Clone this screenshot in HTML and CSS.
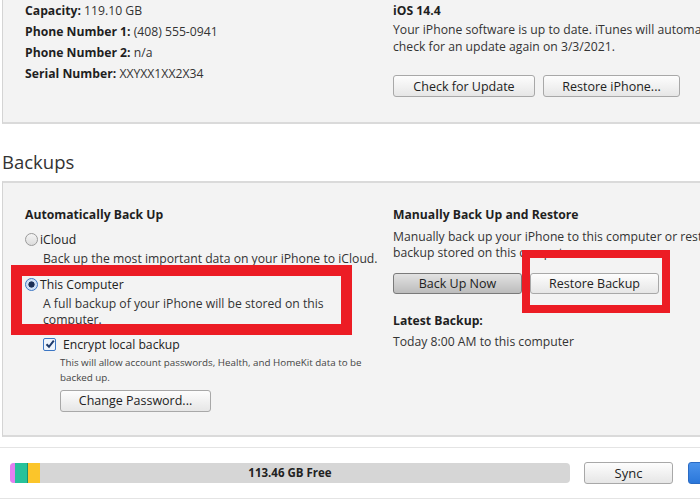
FILE: index.html
```html
<!DOCTYPE html>
<html lang="en">
<head>
    <meta charset="UTF-8">
    <title>iPhone - Summary</title>
    <link rel="stylesheet" href="styles.css">
</head>
<body>
    <div class="panel device">
        <div class="col">
            <div class="row"><b>Capacity:</b> 119.10 GB</div>
            <div class="row"><b>Phone Number 1:</b> (408) 555-0941</div>
            <div class="row"><b>Phone Number 2:</b> n/a</div>
            <div class="row"><b>Serial Number:</b> XXYXX1XX2X34</div>
        </div>
        <div class="col">
            <div class="row"><b>iOS 14.4</b></div>
            <p class="desc">Your iPhone software is up to date. iTunes will automatically<br>check for an update again on 3/3/2021.</p>
            <div class="buttons top-buttons">
                <button class="btn w-142">Check for Update</button>
                <button class="btn w-137">Restore iPhone...</button>
            </div>
        </div>
    </div>

    <h2 class="section-title">Backups</h2>

    <div class="panel backups">
        <div class="col">
            <div class="row"><b>Automatically Back Up</b></div>
            <label class="option first">
                <span class="radio"></span>iCloud
            </label>
            <p class="desc indent">Back up the most important data on your iPhone to iCloud.</p>
            <label class="option">
                <span class="radio checked"></span>This Computer
            </label>
            <p class="desc indent narrow">A full backup of your iPhone will be stored on this computer.</p>
            <label class="option check-row">
                <span class="checkbox">
                    <svg width="10" height="10" viewBox="0 0 10 10"><path d="M1.5 5.2 L4 7.8 L8.8 1.6" fill="none" stroke="#1d3a6b" stroke-width="2"/></svg>
                </span>Encrypt local backup
            </label>
            <p class="small">This will allow account passwords, Health, and HomeKit data to be<br>backed up.</p>
            <button class="btn w-151 pw-btn">Change Password...</button>
        </div>
        <div class="col">
            <div class="row"><b>Manually Back Up and Restore</b></div>
            <p class="desc manual">Manually back up your iPhone to this computer or restore a<br>backup stored on this computer.</p>
            <div class="buttons backup-buttons">
                <button class="btn pressed w-129">Back Up Now</button>
                <button class="btn w-129">Restore Backup</button>
            </div>
            <div class="row latest"><b>Latest Backup:</b></div>
            <div class="row">Today 8:00 AM to this computer</div>
        </div>

        <!-- annotation boxes -->
        <div class="mark mark-left"></div>
        <div class="mark mark-right"></div>
    </div>

    <div class="footer">
        <div class="storage">
            <span class="seg" style="width:5px;background:#e47ff2"></span>
            <span class="seg" style="width:12px;background:#27c29b"></span>
            <span class="seg" style="width:1px;background:#1f8f6f"></span>
            <span class="seg" style="width:12px;background:#fbc52a"></span>
            <span class="free">113.46 GB Free</span>
        </div>
        <button class="btn sync">Sync</button>
        <button class="btn done"></button>
    </div>
</body>
</html>
```

FILE: styles.css
```css
html, body {
    margin: 0;
    padding: 0;
    overflow: hidden;
}
body {
    width: 760px;
    font-family: "Open Sans", "Noto Sans", sans-serif;
    font-size: 12.2px;
    color: #333;
    background-color: white;
}
b {
    color: #1f1f1f;
    font-weight: 700;
}
.panel {
    margin-left: 2px;
    background-color: #f3f3f3;
    border-left: 1px solid #d4d4d4;
    display: grid;
    grid-template-columns: 368px 1fr;
    padding-left: 22px;
}
.device {
    height: 122px;
    border-bottom: 2px solid #dadada;
}
.backups {
    position: relative;
    height: 231px;
    border-top: 2px solid #dadada;
    border-bottom: 2px solid #dadada;
    padding-top: 21px;
}
.row {
    line-height: 21px;
    white-space: nowrap;
}
.desc {
    margin: 1px 0 0;
    line-height: 16.5px;
    white-space: nowrap;
}
.top-buttons {
    margin-top: 20px;
}
.buttons {
    display: flex;
    gap: 8px;
}
.btn {
    font-family: inherit;
    font-size: 12.5px;
    color: #222;
    height: 22px;
    padding: 0;
    border: 1px solid #a8a8a8;
    border-radius: 3px;
    background: linear-gradient(#fdfdfd, #e6e6e6);
}
.w-142 { width: 142px; }
.w-137 { width: 137px; }
.w-129 { width: 129px; }
.w-151 { width: 151px; }
.btn.pressed {
    border-color: #7a7a7a;
    background: linear-gradient(#e2e2e2, #bcbcbc);
}

.section-title {
    margin: 0;
    height: 57px;
    box-sizing: border-box;
    padding: 25px 0 0 2px;
    font-size: 18.5px;
    font-weight: 400;
    color: #333;
    line-height: 26px;
}

.option {
    display: flex;
    align-items: center;
    line-height: 21px;
    margin-top: 6px;
    color: #222;
}
.option.first {
    margin-top: 4px;
}
.radio {
    width: 11px;
    height: 11px;
    border-radius: 50%;
    border: 1px solid #9a9a9a;
    background: linear-gradient(#f4f4f4, #dcdcdc);
    margin-right: 2px;
    box-sizing: content-box;
}
.radio.checked {
    border-color: #3b76c4;
    background: radial-gradient(circle, #1c2f55 0 2.8px, #cfe0f5 3.4px);
}
.indent {
    padding-left: 18px;
}
.narrow {
    white-space: normal;
    width: 300px;
}
.check-row {
    padding-left: 18px;
    margin-top: 5px;
}
.checkbox {
    width: 11px;
    height: 11px;
    border: 1px solid #3b76c4;
    background: #eef4fc;
    border-radius: 2px;
    margin-right: 7px;
    display: flex;
    align-items: center;
    justify-content: center;
}
.small {
    margin: 0;
    padding-left: 35px;
    font-size: 9.8px;
    line-height: 15px;
    color: #444;
    white-space: nowrap;
}
.pw-btn {
    margin: 5px 0 0 35px;
}
.manual {
    margin-top: 4px;
    line-height: 16px;
}
.backup-buttons {
    margin-top: 12px;
}
.backup-buttons .btn {
    height: 21px;
}
.latest {
    margin-top: 16px;
}

.mark {
    position: absolute;
    border: 11px solid #ec1c24;
    box-sizing: border-box;
}
.mark-left {
    left: 8px;
    top: 82px;
    width: 341px;
    height: 70px;
}
.mark-right {
    left: 519px;
    top: 67px;
    width: 148px;
    height: 63px;
    border-width: 8px;
}

.footer {
    margin-top: 10px;
    height: 52px;
    border-top: 1px solid #e4e4e4;
    border-bottom: 1px solid #e4e4e4;
    display: flex;
    align-items: center;
    padding-left: 10px;
    box-sizing: border-box;
}
.storage {
    position: relative;
    width: 560px;
    height: 20px;
    border-radius: 4px;
    background-color: #d6d6d6;
    overflow: hidden;
    display: flex;
}
.seg {
    height: 100%;
}
.free {
    position: absolute;
    left: 0;
    right: 0;
    top: 0;
    line-height: 20px;
    text-align: center;
    font-size: 11.5px;
    font-weight: 700;
    color: #222;
}
.sync {
    margin-left: 14px;
    width: 89px;
    font-size: 13px;
}
.done {
    margin-left: 15px;
    width: 60px;
    border-color: #2a6bc4;
    background: linear-gradient(#4a93ec, #2b77da);
}
```
